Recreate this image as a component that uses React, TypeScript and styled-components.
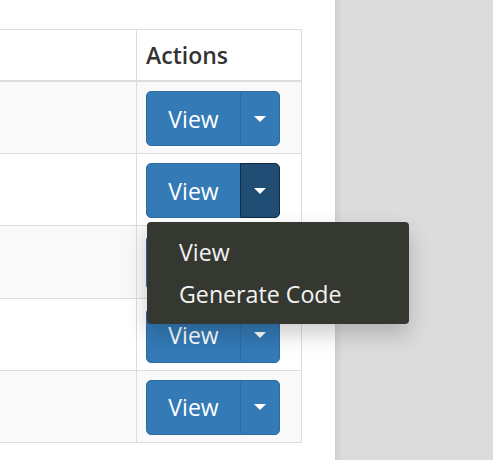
import React from 'react';
import styled, { createGlobalStyle, css } from 'styled-components';

const GlobalStyle = createGlobalStyle`
  html, body {
    margin: 0;
    padding: 0;
    font-family: 'Open Sans', 'Noto Sans', sans-serif;
    color: #333;
  }
`;

const Page = styled.div`
  display: flex;
  height: 100vh;
  overflow: hidden;
`;

const Main = styled.main`
  position: relative;
  z-index: 1;
  width: 335px;
  background-color: #fff;
  padding-top: 29px;
`;

const Sidebar = styled.aside`
  flex: 1;
  background-color: #dcdcdc;
  box-shadow: inset 10px 0 10px -10px rgba(0, 0, 0, 0.12);
`;

const Table = styled.table`
  border-spacing: 0;
  width: 302px;
  font-size: 23px;

  th,
  td {
    border-right: 1px solid #ddd;
    text-align: left;
  }

  th {
    height: 50px;
    padding: 0 9px;
    line-height: 32px;
    font-size: 23px;
    font-weight: 600;
    vertical-align: middle;
    border-top: 1px solid #ddd;
    border-bottom: 2px solid #ddd;
  }

  td {
    height: 62.2px;
    padding: 9px 9px 0;
    vertical-align: top;
    border-bottom: 1px solid #ddd;
  }

  th:first-child,
  td:first-child {
    width: 118px;
  }
`;

const Row = styled.tr<{ striped: boolean }>`
  background-color: ${({ striped }) => (striped ? '#f9f9f9' : '#fff')};
`;

const BtnGroup = styled.div`
  position: relative;
  display: inline-flex;
  vertical-align: top;
`;

const btnBase = css`
  display: flex;
  align-items: center;
  justify-content: center;
  height: 55px;
  box-sizing: border-box;
  border: 1px solid #2e6da4;
  background-color: #337ab7;
  color: #fff;
  font-family: inherit;
  font-size: 23px;
  padding: 0;
  cursor: pointer;
`;

const MainBtn = styled.button`
  ${btnBase};
  width: 95px;
  border-radius: 5px 0 0 5px;
`;

const CaretBtn = styled.button<{ open: boolean }>`
  ${btnBase};
  width: 40px;
  margin-left: -1px;
  border-radius: 0 5px 5px 0;

  ${({ open }) =>
    open &&
    css`
      background-color: #204d74;
      border-color: #122b40;
    `}
`;

const Caret = styled.span`
  display: block;
  width: 0;
  height: 0;
  border-top: 6px solid #fff;
  border-left: 6px solid transparent;
  border-right: 6px solid transparent;
`;

const Menu = styled.ul`
  position: absolute;
  top: calc(100% + 4px);
  left: 1px;
  z-index: 10;
  width: 262px;
  box-sizing: border-box;
  margin: 0;
  padding: 9px 0;
  list-style: none;
  background-color: #353831;
  border-radius: 4px;
  box-shadow: 0 10px 22px rgba(0, 0, 0, 0.2);
`;

const MenuItem = styled.li`
  padding: 0 32px;
  line-height: 42px;
  font-size: 23.2px;
  color: #f2f2f2;
  white-space: nowrap;
`;

const rows = [0, 1, 2, 3, 4];
const openRow = 1;

export default function App() {
  return (
    <>
      <GlobalStyle />
      <Page>
        <Main>
          <Table>
            <thead>
              <tr>
                <th></th>
                <th>Actions</th>
              </tr>
            </thead>
            <tbody>
              {rows.map((r) => (
                <Row key={r} striped={r % 2 === 0}>
                  <td></td>
                  <td>
                    <BtnGroup>
                      <MainBtn>View</MainBtn>
                      <CaretBtn open={r === openRow}>
                        <Caret />
                      </CaretBtn>
                      {r === openRow && (
                        <Menu>
                          <MenuItem>View</MenuItem>
                          <MenuItem>Generate Code</MenuItem>
                        </Menu>
                      )}
                    </BtnGroup>
                  </td>
                </Row>
              ))}
            </tbody>
          </Table>
        </Main>
        <Sidebar />
      </Page>
    </>
  );
}
